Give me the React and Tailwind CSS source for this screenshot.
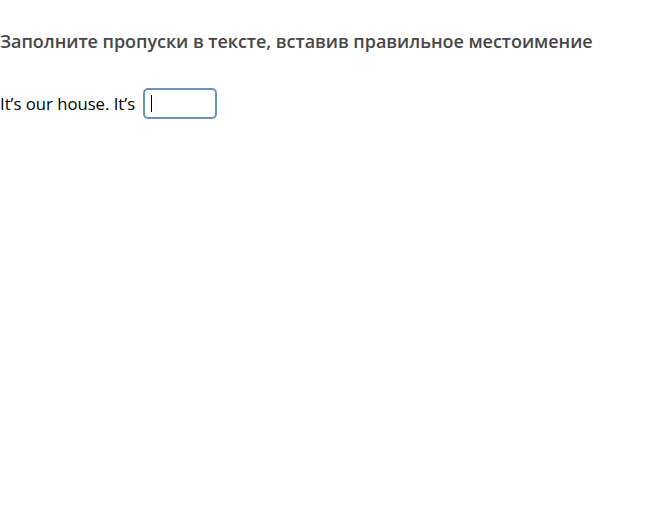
export default function App() {
  return (
    <div className="w-[653px] h-[528px] bg-white" style={{ fontFamily: '"Open Sans", sans-serif' }}>
      <div className="pt-[28px] text-[18px] font-semibold text-[#474747] leading-[26px] tracking-[-0.05px]">
        Заполните пропуски в тексте, вставив правильное местоимение
      </div>
      <div className="mt-[34px] flex items-center text-[16.7px] text-black">
        <span>It’s our house. It’s</span>
        <div className="ml-[8px] w-[74px] h-[31px] border-2 border-[#6a93b8] rounded-[5px] flex items-center pl-[6px]">
          <div className="w-px h-[17px] bg-black"></div>
        </div>
      </div>
    </div>
  );
}
